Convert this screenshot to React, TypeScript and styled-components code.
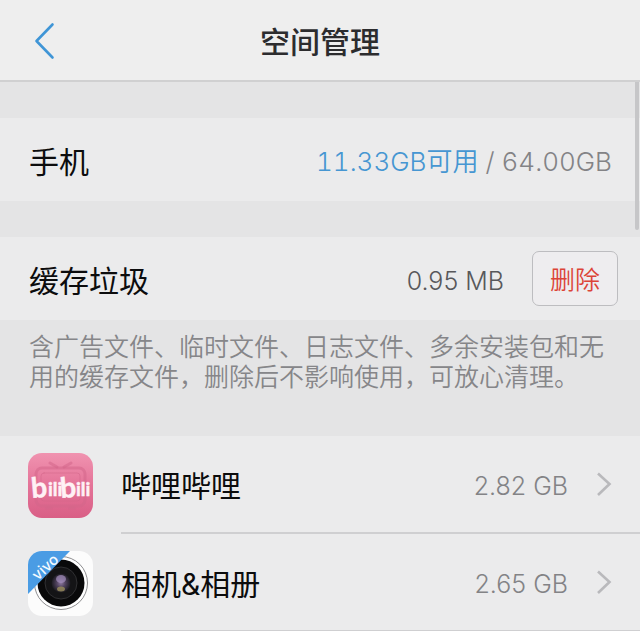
import React from "react";
import styled, { createGlobalStyle } from "styled-components";

const GlobalStyle = createGlobalStyle`
  * { box-sizing: border-box; }
  body {
    margin: 0;
    background: #e4e4e5;
    color: #0c0c0d;
    font-family: Inter, "Noto Sans CJK SC", sans-serif;
    font-size: 30px;
    line-height: 40px;
  }
  button { font: inherit; }
`;

const Page = styled.div`
  display: flex;
  flex-direction: column;
`;

const Header = styled.header`
  display: grid;
  grid-template-columns: 88px 1fr 88px;
  align-items: center;
  height: 82px;
  background: #eeeeee;
  border-bottom: 2px solid #d0d0d1;
`;

const BackButton = styled.button`
  display: flex;
  align-items: center;
  height: 80px;
  padding: 0 0 0 32px;
  border: 0;
  background: none;
  color: #3f95d6;
  cursor: pointer;
`;

const Title = styled.h1`
  margin: 0;
  padding-top: 4px;
  font-size: 30px;
  font-weight: 500;
  line-height: 40px;
  text-align: center;
  color: #2c2c2e;
`;

const Content = styled.main`
  position: relative;
`;

const ScrollThumb = styled.div`
  position: absolute;
  top: 0;
  right: 1px;
  width: 4px;
  height: 148px;
  border-radius: 0 0 2px 2px;
  background: #c6c6c8;
`;

const Section = styled.section`
  padding-top: 36px;
`;

const Row = styled.div`
  display: flex;
  align-items: center;
  justify-content: space-between;
  height: 83px;
  padding: 0 22px 0 29px;
  background: #ebebec;
`;

const Label = styled.h2`
  margin: 0;
  padding-top: 4px;
  font-size: 30px;
  font-weight: 400;
`;

const Value = styled.span<{ $tone?: "dark" }>`
  padding-top: 4px;
  font-size: 25px;
  font-weight: 350;
  white-space: nowrap;
  color: ${({ $tone }) => ($tone === "dark" ? "#58585b" : "#838386")};
`;

const Storage = styled(Value)`
  padding-right: 6px;
  font-size: 26px;
  font-variant-numeric: tabular-nums;
`;

const Available = styled.span`
  color: #4696d2;
`;

const Actions = styled.div`
  display: flex;
  align-items: center;
  gap: 28px;
`;

const DeleteButton = styled.button`
  width: 86px;
  height: 55px;
  padding: 2px 0 0;
  border: 1px solid #bdbdc0;
  border-radius: 7px;
  background: #eeedef;
  color: #dc4437;
  font-size: 25px;
  font-weight: 350;
  cursor: pointer;
`;

const Description = styled.p`
  margin: 0;
  padding: 12px 29px 44px;
  font-size: 25px;
  font-weight: 350;
  line-height: 30px;
  color: #868689;
`;

const AppList = styled.ul`
  margin: 0;
  padding: 0;
  list-style: none;
  background: #ebebec;
`;

const AppItem = styled.li`
  display: flex;
`;

const AppLink = styled.a`
  display: flex;
  flex: 1;
  gap: 28px;
  padding-left: 28px;
  color: inherit;
  text-decoration: none;
`;

const IconSlot = styled.span`
  display: flex;
  align-items: center;
`;

const AppBody = styled.span`
  display: flex;
  flex: 1;
  align-items: center;
  gap: 28px;
  height: 98px;
  padding-right: 28px;
  border-bottom: 2px solid #cfcfd1;
`;

const AppName = styled.span`
  flex: 1;
  padding-top: 4px;
`;

const BackIcon = () => (
  <svg width="24" height="40" viewBox="0 0 24 40" fill="none" aria-hidden="true">
    <path d="M20.500 4.500L4.500 21L20.500 37.500" stroke="currentColor" strokeWidth="2.600" strokeLinecap="round" strokeLinejoin="round" />
  </svg>
);

const Chevron = () => (
  <svg width="16" height="26" viewBox="0 0 16 26" fill="none" aria-hidden="true">
    <path d="M2 2.500L13.500 13L2 24" stroke="#b9b9bc" strokeWidth="2.600" />
  </svg>
);

const BilibiliIcon = () => (
  <svg width="65" height="65" viewBox="0 0 65 65" aria-hidden="true">
    <defs>
      <linearGradient id="pink" x1="0" y1="0" x2="0" y2="1">
        <stop offset="0" stopColor="#f093b0" />
        <stop offset="0.5" stopColor="#e47398" />
        <stop offset="1" stopColor="#d95f86" />
      </linearGradient>
    </defs>
    <rect width="65" height="65" rx="14" fill="url(#pink)" />
    <g fill="none" stroke="#d4668b" strokeOpacity="0.55" strokeLinecap="round">
      <rect x="8" y="15" width="49" height="38" rx="6" strokeWidth="3" />
      <rect x="13" y="20" width="39" height="28" rx="3" strokeWidth="1" />
      <path d="M22 10L29 14M43 10L36 14M19 55H23M42 55H46" strokeWidth="3" />
    </g>
    <g fill="#fff1f5" stroke="#fff1f5" strokeWidth="0.500" fontFamily="Lato, sans-serif" fontWeight="700">
      <text x="4" y="45" fontSize="28" transform="rotate(-5 5 45)">b</text>
      <text x="20" y="43" fontSize="19">ili</text>
      <text x="33" y="45" fontSize="28" transform="rotate(-5 34 45)">b</text>
      <text x="48" y="43" fontSize="19">ili</text>
    </g>
  </svg>
);

const CameraIcon = () => (
  <svg width="65" height="65" viewBox="0 0 65 65" aria-hidden="true">
    <defs>
      <clipPath id="tile"><rect width="65" height="65" rx="14" /></clipPath>
      <radialGradient id="lens">
        <stop offset="0" stopColor="#8d789f" />
        <stop offset="0.45" stopColor="#51435f" />
        <stop offset="1" stopColor="#1b1a20" />
      </radialGradient>
    </defs>
    <g clipPath="url(#tile)">
      <rect width="65" height="65" fill="#fcfcfc" />
      <circle cx="33" cy="32" r="26.500" fill="#fff" stroke="#8d8d8f" strokeWidth="1" />
      <circle cx="33" cy="32" r="23.500" fill="#09090a" />
      <circle cx="33" cy="32" r="16" fill="#141416" stroke="#303032" strokeWidth="1" />
      <circle cx="33" cy="32" r="9.500" fill="url(#lens)" />
      <ellipse cx="33" cy="28" rx="5" ry="4" fill="#a590bf" opacity="0.7" />
      <ellipse cx="33" cy="38" rx="4" ry="2.500" fill="#94885b" opacity="0.85" />
      <path d="M0 0H42L0 43Z" fill="#4a9ce4" />
    </g>
    <text x="18" y="21" fill="#f4faff" fontFamily="Inter, sans-serif" fontSize="15" fontWeight="500" textAnchor="middle" transform="rotate(-43 18 17)">vivo</text>
  </svg>
);

const apps = [
  { name: "哔哩哔哩", size: "2.82 GB", icon: <BilibiliIcon />, href: "#bilibili" },
  { name: "相机&相册", size: "2.65 GB", icon: <CameraIcon />, href: "#camera" },
];

export default function App() {
  return (
    <Page lang="zh-CN">
      <GlobalStyle />
      <Header>
        <BackButton type="button" aria-label="返回"><BackIcon /></BackButton>
        <Title>空间管理</Title>
      </Header>
      <Content>
        <ScrollThumb />
        <Section>
          <Row>
            <Label>手机</Label>
            <Storage><Available>11.33GB可用</Available> / 64.00GB</Storage>
          </Row>
        </Section>
        <Section>
          <Row>
            <Label>缓存垃圾</Label>
            <Actions>
              <Value $tone="dark">0.95 MB</Value>
              <DeleteButton type="button">删除</DeleteButton>
            </Actions>
          </Row>
          <Description>含广告文件、临时文件、日志文件、多余安装包和无用的缓存文件，删除后不影响使用，可放心清理。</Description>
        </Section>
        <AppList>
          {apps.map((app) => (
            <AppItem key={app.name}>
              <AppLink href={app.href}>
                <IconSlot>{app.icon}</IconSlot>
                <AppBody>
                  <AppName>{app.name}</AppName>
                  <Value>{app.size}</Value>
                  <Chevron />
                </AppBody>
              </AppLink>
            </AppItem>
          ))}
        </AppList>
      </Content>
    </Page>
  );
}
